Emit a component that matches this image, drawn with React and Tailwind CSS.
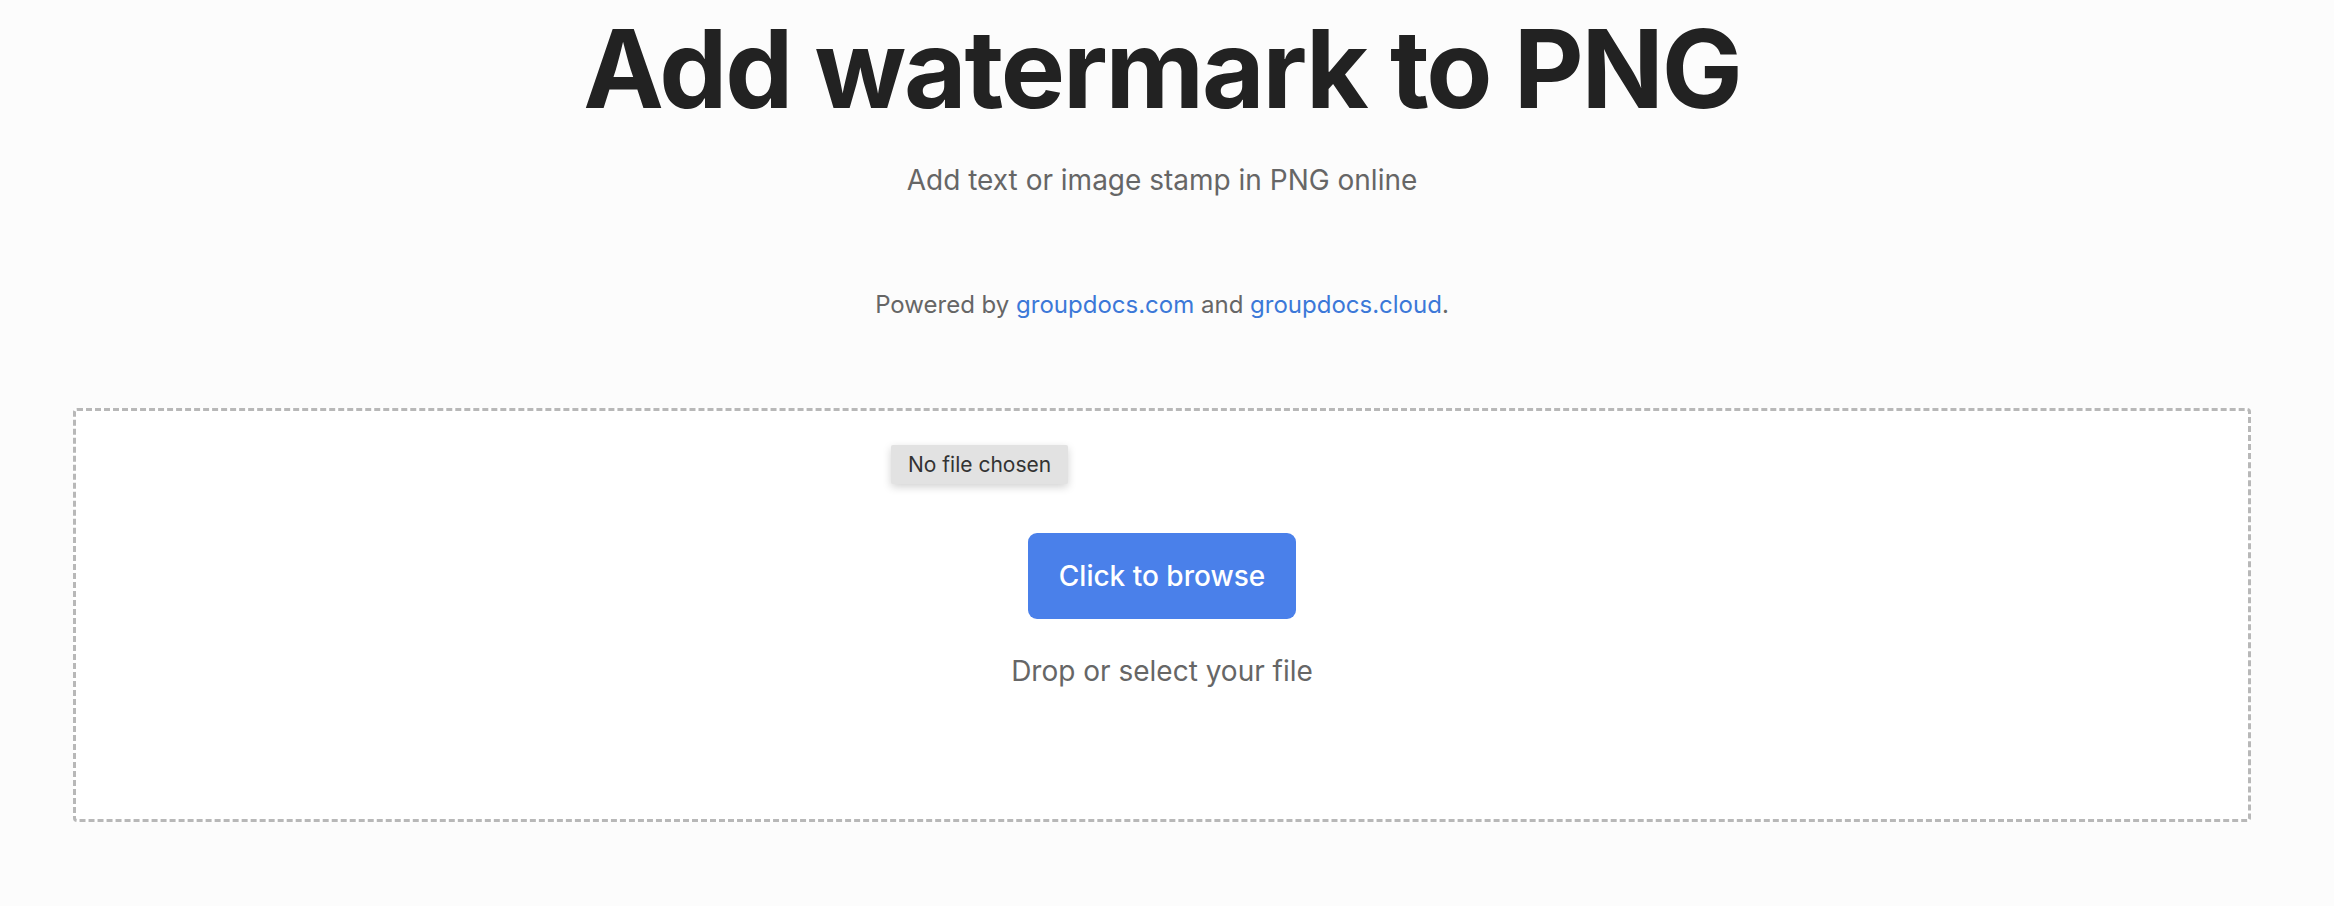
import React from 'react';

const App = () => {
  return (
    <div
      className="min-h-[906px] bg-[#fcfcfc] pr-[10px] text-[#222]"
      style={{ fontFamily: 'Inter, "Noto Sans", sans-serif' }}
    >
      <div className="flex flex-col items-center">
        <h1 className="mt-[4px] text-[108px] font-bold leading-[1.2] tracking-[-0.02em] text-[#222]">
          Add watermark to PNG
        </h1>
        <p className="mt-[30px] text-[28px] leading-[1.2] text-[#666]">
          Add text or image stamp in PNG online
        </p>
        <p className="mt-[94px] text-[24px] leading-[1.2] text-[#666]">
          Powered by{' '}
          <a href="#" className="text-[#3b78d8]">groupdocs.com</a>
          {' '}and{' '}
          <a href="#" className="text-[#3b78d8]">groupdocs.cloud</a>.
        </p>
      </div>

      <div className="mx-[73px] mt-[88px] h-[414px] rounded-[4px] border-[3px] border-dashed border-[#b8b8b8] bg-white">
        <div className="flex flex-col items-center">
          {/* file input label */}
          <div className="mt-[34px] ml-[815px] self-start rounded-[2px] bg-[#e2e2e2] px-[17px] py-[7px] text-[21px] leading-[1.2] text-[#333] shadow-[0_3px_8px_rgba(0,0,0,0.18)]">
            No file chosen
          </div>
          <button className="mt-[49px] h-[86px] w-[268px] rounded-[9px] bg-[#4a80ea] text-[28px] font-medium text-white">
            Click to browse
          </button>
          <p className="mt-[36px] text-[28px] leading-[1.2] text-[#666]">
            Drop or select your file
          </p>
        </div>
      </div>
    </div>
  );
};

export default App;
